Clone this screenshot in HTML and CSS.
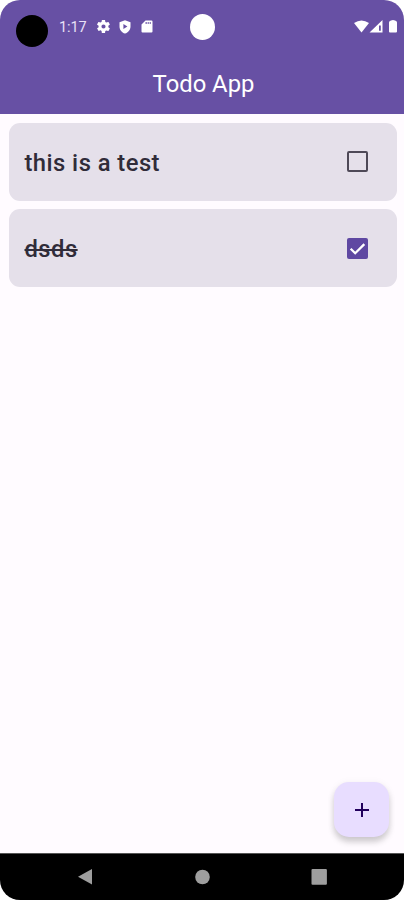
FILE: index.html
```html
<!DOCTYPE html>
<html lang="en">
<head>
<meta charset="utf-8">
<title>Todo App</title>
<link rel="stylesheet" href="styles.css">
</head>
<body>
<div class="phone">
  <header class="app-header">
    <div class="status-bar">
      <span class="record-dot"></span>
      <span class="clock">1:17</span>
      <svg class="status-icon gear" viewBox="2 2 20 20"><path fill-rule="evenodd" d="M19.4 13a7.500 7.500 0 0 0 0-2l2.100-1.700c.2-.1.200-.4.100-.6l-2-3.500c-.1-.2-.4-.3-.6-.2l-2.500 1a7.300 7.300 0 0 0-1.700-1l-.4-2.600a.5.5 0 0 0-.5-.4h-4a.5.5 0 0 0-.5.400L9 5a7.700 7.700 0 0 0-1.700 1l-2.500-1c-.2-.1-.5 0-.6.200l-2 3.500c-.1.200-.1.500.1.600L4.500 11a7.900 7.900 0 0 0 0 2l-2.200 1.600c-.2.200-.2.400-.1.600l2 3.500c.1.200.4.300.6.200l2.500-1c.5.400 1.100.7 1.700 1l.4 2.700c0 .2.200.4.500.4h4c.2 0 .5-.2.500-.4L14.800 19a7.300 7.300 0 0 0 1.700-1l2.500 1c.2.100.5 0 .6-.2l2-3.500c.1-.2.100-.5-.1-.6zM12 15.200a3.200 3.200 0 1 1 0-6.400 3.200 3.200 0 0 1 0 6.400z"/></svg>
      <svg class="status-icon shield" viewBox="0 0 12 14"><path fill-rule="evenodd" d="M6 0.300 11.500 2.300V6.500C11.500 9.700 9.300 12.600 6 13.600 2.700 12.600.5 9.700.5 6.500V2.300zM4.400 4V9L8.400 6.500z"/></svg>
      <svg class="status-icon card-icon" viewBox="0 0 12 13"><path fill-rule="evenodd" d="M4.500.5H10.500Q11.500.5 11.500 1.500V11.500Q11.500 12.500 10.500 12.500H1.500Q.5 12.500.5 11.500V4.500zM4.600 2V4H5.700V2zM6.700 2V4H7.700V2zM8.700 2V4H9.700V2z"/></svg>
      <span class="camera"></span>
      <svg class="signals" viewBox="0 0 46 16">
        <path d="M0 3Q7.500-2 15 3L7.500 12.500z"/>
        <path fill-rule="evenodd" d="M15.500 12.500 28.500 0V12.500zM25 5.500V10.800H26.800V5.500z"/>
        <path d="M35 2.500Q35 .8 37 .5L39 0 41 .5Q43 .8 43 2.500V11.500Q43 12.500 42 12.500H36Q35 12.500 35 11.500z"/>
      </svg>
    </div>
    <h1 class="title">Todo App</h1>
  </header>
  <main class="todo-list">
    <div class="todo">
      <span class="label">this is a test</span>
      <span class="box"></span>
    </div>
    <div class="todo">
      <span class="label done">dsds</span>
      <span class="box checked"><svg viewBox="0 0 20 20"><path d="M3.500 10.200 7.800 14.500 16.500 5.800"/></svg></span>
    </div>
  </main>
  <button class="fab" aria-label="Add"><svg viewBox="0 0 14 14"><path d="M7 0V14M0 7H14"/></svg></button>
  <nav class="nav-bar">
    <svg viewBox="0 0 16 18"><path d="M15 1V16.500L1 8.800z"/></svg>
    <svg viewBox="0 0 16 18"><circle cx="8.500" cy="9" r="7.300"/></svg>
    <svg viewBox="0 0 16 18"><rect x=".5" y="1" width="15.400" height="15.700" rx="1"/></svg>
  </nav>
</div>
</body>
</html>
```
FILE: styles.css
```css
* { box-sizing: border-box; }
body {
  margin: 0;
  background: #fff;
  font-family: Roboto, "Liberation Sans", sans-serif;
}
.phone {
  position: relative;
  display: flex;
  flex-direction: column;
  width: 404px;
  height: 900px;
  overflow: hidden;
  background: #fffbff;
  border-radius: 20px;
}
.app-header {
  height: 114px;
  background: #6750a4;
  color: #fff;
}
.status-bar {
  position: relative;
  display: flex;
  align-items: center;
  height: 53px;
  padding-left: 16px;
}
.record-dot {
  width: 32px;
  height: 32px;
  margin-top: 9px;
  border-radius: 50%;
  background: #000;
}
.clock {
  width: 38px;
  margin-top: 1px;
  margin-left: 11px;
  font-size: 14.500px;
  letter-spacing: -0.100px;
  color: #e9e1f7;
}
.status-icon { fill: #fff; flex: none; }
.gear { width: 13px; height: 13px; }
.shield { width: 12px; height: 14px; margin-left: 9px; }
.card-icon { width: 12px; height: 13px; margin-left: 10px; }
.camera {
  position: absolute;
  left: 190px;
  top: 14px;
  width: 25px;
  height: 26px;
  border-radius: 50%;
  background: #fff;
}
.signals {
  width: 46px;
  height: 16px;
  margin-left: auto;
  margin-right: 4px;
  margin-top: 3px;
  fill: #fff;
}
.title {
  margin: 0;
  padding-left: 3px;
  font-size: 23.800px;
  font-weight: 400;
  line-height: 63px;
  text-align: center;
}
.todo-list {
  display: flex;
  flex: 1;
  flex-direction: column;
  gap: 8.500px;
  padding: 8.500px 7.500px 0 8.500px;
}
.todo {
  display: flex;
  align-items: center;
  justify-content: space-between;
  height: 78px;
  padding: 0 28.500px 0 16px;
  border-radius: 11px;
  background: #e5e0ea;
}
.label {
  padding-top: 2px;
  font-size: 23.800px;
  font-weight: 500;
  letter-spacing: 0.450px;
  color: #302c39;
}
.done { text-decoration: line-through 2px; }
.box {
  width: 21px;
  height: 21px;
  border: 2px solid #4e4957;
  border-radius: 2px;
}
.checked {
  border: 0;
  background: #5f48a2;
}
.checked svg {
  display: block;
  fill: none;
  stroke: #fff;
  stroke-width: 2.200;
}
.fab {
  position: absolute;
  left: 334px;
  top: 782px;
  display: grid;
  place-items: center;
  width: 55px;
  height: 55px;
  padding: 0;
  border: 0;
  border-radius: 15px;
  background: #e8ddff;
  box-shadow: 0 5px 6px rgba(0, 0, 0, 0.18), 0 1px 8px rgba(0, 0, 0, 0.05);
}
.fab svg {
  width: 14px;
  height: 14px;
  stroke: #22005d;
  stroke-width: 2;
}
.nav-bar {
  display: flex;
  align-items: center;
  justify-content: space-between;
  height: 47px;
  padding: 0 77px 1px;
  border-top: 1px solid #555;
  background: #000;
}
.nav-bar svg {
  width: 16px;
  height: 18px;
  fill: #9e9e9e;
}
```
